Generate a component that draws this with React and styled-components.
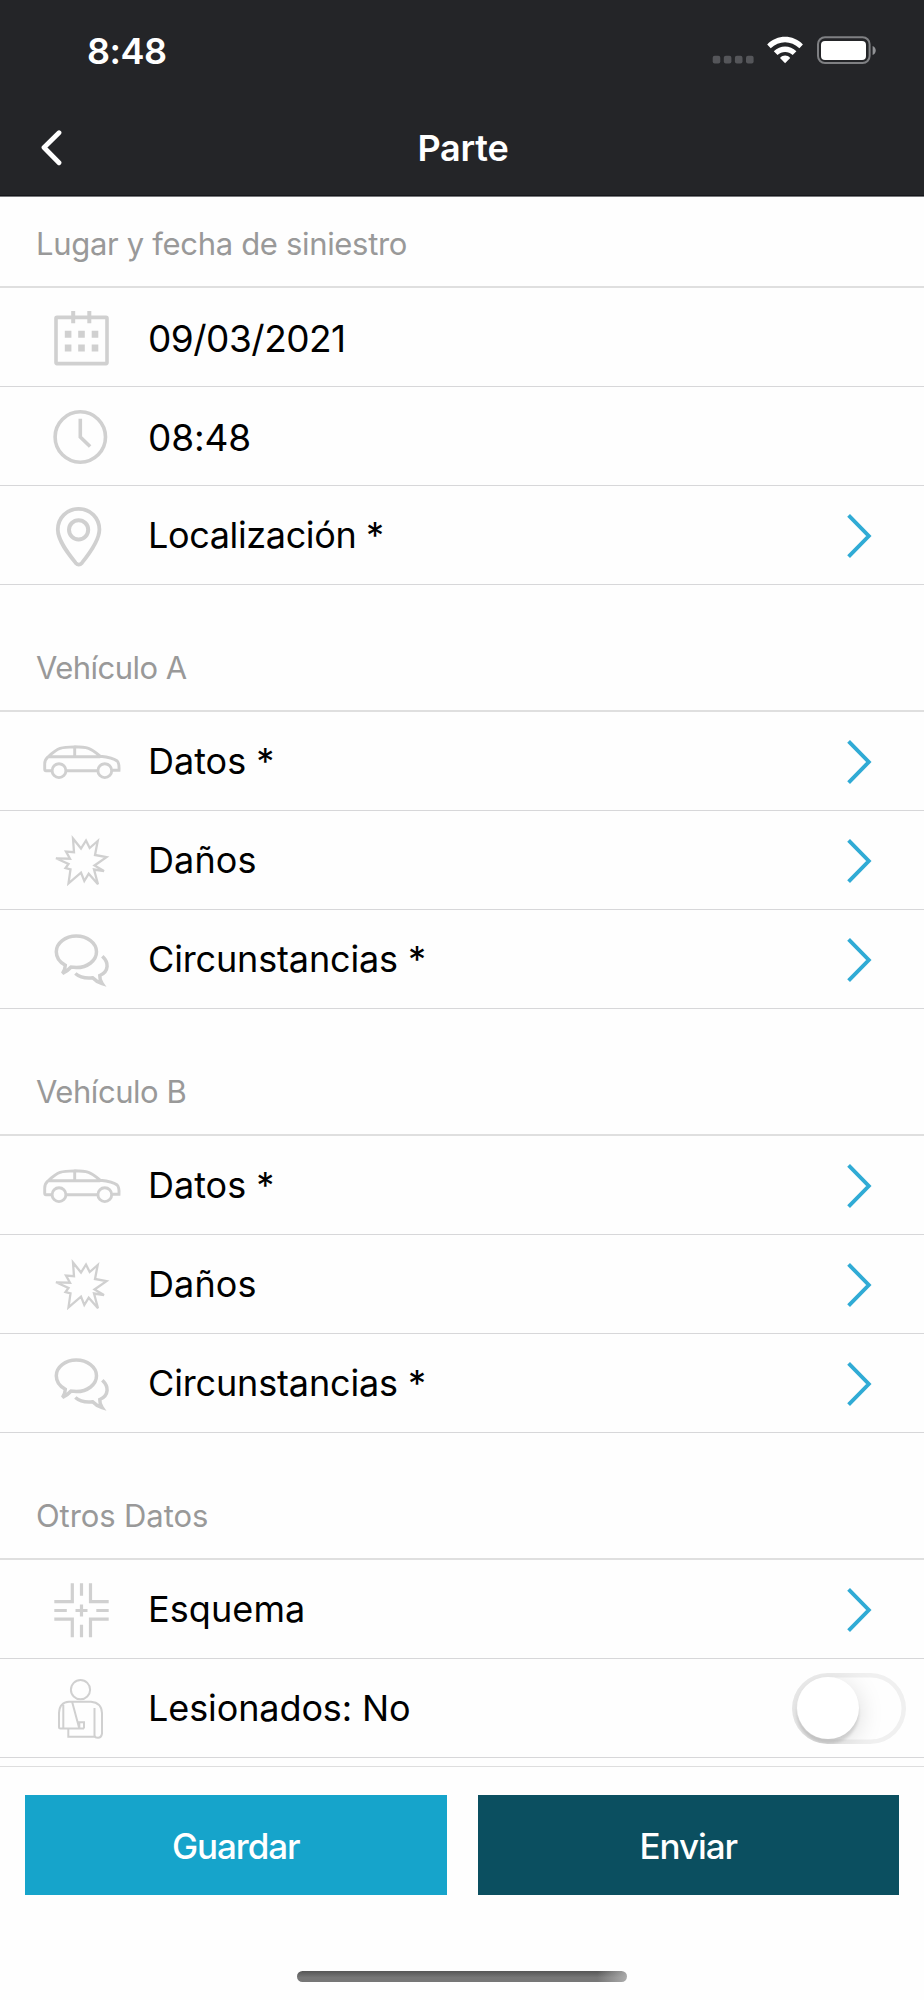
import React, { useState } from "react";
import styled, { createGlobalStyle } from "styled-components";

const GlobalStyle = createGlobalStyle`
  *, *::before, *::after { box-sizing: border-box; }
  body {
    margin: 0;
    background: #fefefe;
    font-family: Inter, "Liberation Sans", sans-serif;
  }
`;

const Screen = styled.div`
  display: flex;
  flex-direction: column;
  width: 924px;
  height: 2000px;
  overflow: hidden;
  background: #fefefe;
`;

const StatusBar = styled.div`
  display: flex;
  align-items: center;
  justify-content: space-between;
  flex: none;
  height: 101px;
  padding: 0 47px 0 87px;
  background: #242528;
`;

const Clock = styled.span`
  color: #fff;
  font-size: 36px;
  font-weight: 600;
  letter-spacing: -0.5px;
`;

const NavBar = styled.header`
  display: grid;
  grid-template-columns: 120px 1fr 120px;
  align-items: center;
  flex: none;
  height: 96px;
  padding-bottom: 2px;
  background: #242528;
  border-bottom: 1px solid #77787b;
  box-shadow: inset 0 -1px 0 #15161a;
`;

const BackButton = styled.button`
  display: flex;
  align-items: center;
  height: 93px;
  padding: 0 0 0 38px;
  border: 0;
  background: none;
`;

const Title = styled.h1`
  margin: 0;
  padding-left: 2px;
  text-align: center;
  color: #fff;
  font-size: 36px;
  font-weight: 600;
  letter-spacing: -0.2px;
`;

const List = styled.main`
  flex: none;
  height: 1570px;
  border-bottom: 1px solid #dedede;
`;

const SectionHeader = styled.h2`
  display: flex;
  align-items: flex-end;
  height: ${(p) => (p.$first ? 91 : 127)}px;
  margin: 0;
  padding: 0 0 22px 36px;
  border-bottom: 2px solid #dfdfdf;
  color: #999;
  font-size: 31px;
  line-height: 40px;
  font-weight: 400;
  letter-spacing: ${(p) => p.$tracking}px;
`;

const Row = styled.div`
  display: flex;
  align-items: center;
  height: 99px;
  border-bottom: 1px solid #d7d7d9;
`;

const RowIcon = styled.svg`
  flex: none;
  width: 147px;
  height: 98px;
  fill: none;
  stroke: #d0d0d0;
  stroke-width: ${(p) => p.$weight}px;
`;

const RowLabel = styled.span`
  flex: 1;
  padding: ${(p) => (p.$numeric ? "2px" : "0")} 0 0 1px;
  color: #000;
  font-size: ${(p) => (p.$numeric ? 37 : 36)}px;
  letter-spacing: ${(p) => p.$tracking}px;
  white-space: nowrap;
`;

const Chevron = styled.svg`
  flex: none;
  width: 28px;
  height: 44px;
  margin: 1px 50px 0 0;
  fill: none;
  stroke: #30abd5;
  stroke-width: 3.9px;
`;

const Toggle = styled.button`
  flex: none;
  width: 114px;
  height: 71px;
  margin-right: 18px;
  padding: 4.5px;
  border: 0;
  border-radius: 36px;
  background: #fefefe;
  box-shadow: inset 0 0 0 4.5px #f0f0f0;
  overflow: hidden;
`;

const Knob = styled.span`
  display: block;
  width: 62px;
  height: 62px;
  border-radius: 50%;
  background: #fff;
  box-shadow: 0 5px 3px rgba(0, 0, 0, 0.12), 0 5px 26px rgba(0, 0, 0, 0.15);
  transform: translateX(${(p) => (p.$on ? 43 : 0)}px);
`;

const Footer = styled.footer`
  display: flex;
  flex: 1;
  flex-direction: column;
  align-items: center;
  justify-content: space-between;
  padding: 28px 25px 18px;
`;

const Actions = styled.div`
  display: grid;
  grid-template-columns: 1fr 1fr;
  gap: 31px;
  width: 100%;
`;

const ActionButton = styled.button`
  height: 100px;
  padding: 1px 0 0;
  border: 0;
  background: ${(p) => (p.$primary ? "#0b4f60" : "#16a4cb")};
  color: #fff;
  font-family: inherit;
  font-size: 35px;
  font-weight: 500;
  letter-spacing: -1.05px;
`;

const HomeIndicator = styled.div`
  width: 330px;
  height: 11px;
  border-radius: 6px;
  background: linear-gradient(90deg, transparent 91%, rgba(190, 190, 190, 0.75)),
    linear-gradient(#565656, #777 60%);
`;

const icons = {
  calendar: {
    weight: 3.6,
    art: (
      <>
        <rect x="56" y="29.4" width="51" height="46.2" rx="1" />
        <path d="M73.2 23v12.3M89.3 23v12.3" strokeWidth="4" />
        <path
          d="M64.8 46.3h6.600M78.200 46.300h6.600M91.700 46.300h6.600M64.800 60h6.600M78.200 60h6.600M91.700 60h6.600"
          strokeWidth="7"
        />
      </>
    ),
  },
  clock: {
    weight: 3.600,
    art: (
      <>
        <circle cx="80.3" cy="50" r="25.2" />
        <path d="M80.3 31.7V50l9.8 9.5" />
      </>
    ),
  },
  pin: {
    weight: 3.8,
    art: (
      <>
        <path d="M78.6 22.8c-11.8 0-20.8 9.3-20.8 20.8 0 10.9 10 23.6 17.9 33.3q3.1 3.5 6.2 0C89.8 67.2 99.4 54.5 99.4 43.6c0-11.5-9-20.8-20.8-20.8z" />
        <circle cx="78.6" cy="43.8" r="9.6" strokeWidth="4" />
      </>
    ),
  },
  car: {
    weight: 2.9,
    art: (
      <>
        <path d="M51.5 58.7H46q-1.3 0-1.3-1.5v-5c0-3.2 1-5.2 3-7 3.6-3.4 8-7.3 12.3-8.8 6-2 22-2.2 28.5 0 4.2 1.5 8 4.8 11.7 7.8 7.3.8 13.8 2.2 17 4.8 2 2 2 5.3 1.8 9.200h-6.800M66.700 58.700h31M48 44.700h52.200M74.700 35v9.700" />
        <circle cx="59" cy="58.7" r="6.9" />
        <circle cx="104.8" cy="58.7" r="6.9" />
      </>
    ),
  },
  burst: {
    weight: 2.3,
    art: (
      <path d="M73 27.500L81 37.500 86 29.500 89.700 37 97.700 30 95 44 106.500 46.200 94.500 54.500 104 60 94 58.500 98 73.300 88.700 62.700 84.300 70 81 61.700 68.500 72.300 70.500 58.300 65.500 57 68.500 53 56 47.300 70 47.700 66 40.500 74 41.200z" />
    ),
  },
  chat: {
    weight: 3.5,
    art: (
      <>
        <path d="M65.3 55.3c-5.6-3-9-8-9-13.5C56.3 33 65.3 26 76.3 26s20.200 7 20.200 15.800-9 15.800-20.200 15.800l-5.200-.6c-2.400 2.800-5.400 4.700-8.600 6.400 1.800-2.700 2.800-5.300 2.800-8.100z" />
        <path d="M102.300 46.300c3.200 3 5 6.500 4.800 10-.3 4-2.800 7.200-7.300 9.200-.2 3 .6 5.600 2.300 8-4-1.200-7.200-3.200-9.500-5.700-7 .8-13-.6-17.300-4.300" />
      </>
    ),
  },
  crossing: {
    weight: 3.2,
    art: (
      <path d="M72.300 23.300v18.400h-18M90.500 23.300v18.400h18.200M54.300 59.200h18V77.300M108.700 59.200H90.500V77.300M81.500 23.300v12.500M81.500 64.800v12.500M54.300 50.500h12.500M96.300 50.500h12.400M75.500 50.500h12M81.500 44.500v12" />
    ),
  },
  injured: {
    weight: 2,
    art: (
      <>
        <circle cx="80.5" cy="30.7" r="9.6" />
        <path d="M84 69.500H60.500q-1.500 0-1.500-1.500V54q.5-10.700 10-11.300h22q10.500.8 11 11.300v20.500q-.6 4-4 4.300-3.500 0-3.500-2.500V49M94.500 77.700H68.300v-8.200M63.300 46v23.500M72.300 43.500l7 26v-6.200h4.700v6.200" />
      </>
    ),
  },
};

const vehicleRows = [
  { icon: "car", label: "Datos *", tracking: 0, action: "link" },
  { icon: "burst", label: "Daños", tracking: 0.1, action: "link" },
  { icon: "chat", label: "Circunstancias *", tracking: -0.15, action: "link" },
];

const sections = [
  {
    title: "Lugar y fecha de siniestro",
    tracking: -0.32,
    rows: [
      { icon: "calendar", label: "09/03/2021", tracking: -0.5, numeric: true },
      { icon: "clock", label: "08:48", tracking: -0.15, numeric: true },
      { icon: "pin", label: "Localización *", tracking: -0.37, action: "link" },
    ],
  },
  { title: "Vehículo A", tracking: -0.55, rows: vehicleRows },
  { title: "Vehículo B", tracking: -0.45, rows: vehicleRows },
  {
    title: "Otros Datos",
    tracking: -0.1,
    rows: [
      { icon: "crossing", label: "Esquema", tracking: 0.1, action: "link" },
      { icon: "injured", label: "Lesionados: No", tracking: -0.1, action: "toggle" },
    ],
  },
];

function StatusIcons() {
  return (
    <svg width="166" height="32" viewBox="711 35 166 32" fill="#fff">
      <g fill="#55565a">
        <rect x="712.7" y="55.8" width="7.6" height="7.6" rx="2" />
        <rect x="723.8" y="55.8" width="7.6" height="7.6" rx="2" />
        <rect x="734.9" y="55.8" width="7.6" height="7.6" rx="2" />
        <rect x="746" y="55.8" width="7.6" height="7.6" rx="2" />
      </g>
      <path d="M767.2 44.500c10-10.200 25.700-10.200 35.700 0l-3.500 3.700c-8.200-8-20.500-8-28.700 0z" />
      <path d="M773.8 51.300c6.400-6.400 16.200-6.400 22.600 0l-3.700 3.700c-4.300-4-10.900-4-15.200 0z" />
      <path d="M780 58c3-3.200 7.200-3.200 10.200 0l-5.100 5.300z" />
      <rect x="818" y="37.2" width="51.6" height="25.8" rx="7" fill="none" stroke="#7f8083" strokeWidth="2" />
      <rect x="821" y="41" width="45" height="19" rx="4" />
      <path d="M872.6 46c4.200 1.600 4.200 7.400 0 9z" fill="#929396" />
    </svg>
  );
}

function ListRow({ row }) {
  const [on, setOn] = useState(false);
  const icon = icons[row.icon];
  return (
    <Row>
      <RowIcon viewBox="0 0 147 98" $weight={icon.weight}>
        {icon.art}
      </RowIcon>
      <RowLabel $tracking={row.tracking} $numeric={row.numeric}>
        {row.label}
      </RowLabel>
      {row.action === "link" && (
        <Chevron viewBox="0 0 28 44">
          <path d="M2.6 1.4L22.800 22 2.600 42.600" />
        </Chevron>
      )}
      {row.action === "toggle" && (
        <Toggle aria-label="Lesionados" aria-pressed={on} onClick={() => setOn(!on)}>
          <Knob $on={on} />
        </Toggle>
      )}
    </Row>
  );
}

export default function App() {
  return (
    <>
      <GlobalStyle />
      <Screen>
        <StatusBar>
          <Clock>8:48</Clock>
          <StatusIcons />
        </StatusBar>
        <NavBar>
          <BackButton aria-label="Atrás">
            <svg width="26" height="36" viewBox="0 0 26 36" fill="none" stroke="#fff" strokeWidth="4.8" strokeLinecap="round" strokeLinejoin="round">
              <path d="M21 2.800L6 17.500 21 32.700" />
            </svg>
          </BackButton>
          <Title>Parte</Title>
        </NavBar>
        <List>
          {sections.map((section, i) => (
            <section key={section.title}>
              <SectionHeader $first={i === 0} $tracking={section.tracking}>
                {section.title}
              </SectionHeader>
              {section.rows.map((row) => (
                <ListRow key={row.label} row={row} />
              ))}
            </section>
          ))}
        </List>
        <Footer>
          <Actions>
            <ActionButton>Guardar</ActionButton>
            <ActionButton $primary>Enviar</ActionButton>
          </Actions>
          <HomeIndicator />
        </Footer>
      </Screen>
    </>
  );
}
